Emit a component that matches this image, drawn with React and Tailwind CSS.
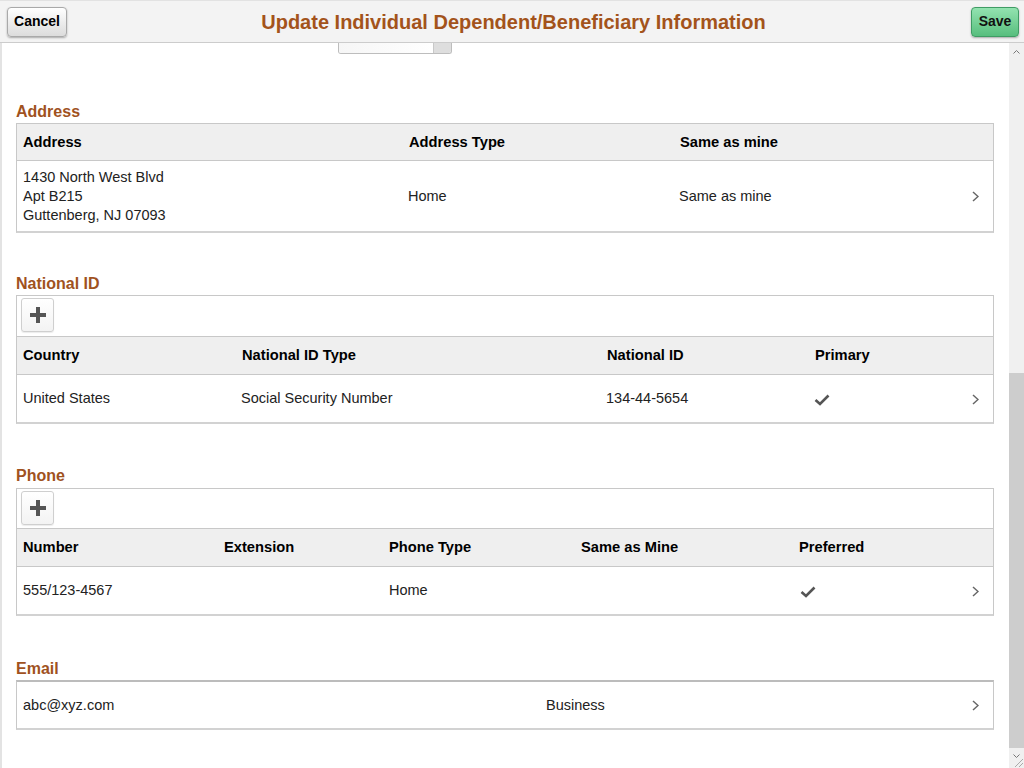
import React from "react";

const Chevron = () => (
  <svg width="7" height="11" viewBox="0 0 7 11" className="block">
    <polyline points="1,1 6,5.5 1,10" fill="none" stroke="#666" strokeWidth="1.5" />
  </svg>
);

const Check = () => (
  <svg width="16" height="12" viewBox="0 0 16 12" className="block">
    <path d="M1.5 6 L6 10 L14.5 1.5" fill="none" stroke="#555" strokeWidth="2.6" />
  </svg>
);

const PlusBtn = () => (
  <div className="w-[33px] h-[34px] border border-[#cfcfcf] rounded-[3px] bg-gradient-to-b from-white to-[#f3f3f3] shadow-[0_1px_1px_rgba(0,0,0,0.08)] flex items-center justify-center">
    <svg width="16" height="16" viewBox="0 0 16 16" className="block">
      <rect x="0" y="6" width="16" height="4" fill="#555" />
      <rect x="6" y="0" width="4" height="16" fill="#555" />
    </svg>
  </div>
);

const Heading = ({ children, mt }) => (
  <div className={`${mt} h-[21px] text-[16px] leading-[19px] font-bold text-[#a0521e]`}>{children}</div>
);

const ChevCell = () => (
  <div className="ml-auto mr-[14px] pt-[1px]">
    <Chevron />
  </div>
);

export default function App() {
  return (
    <div
      className="w-[1024px] h-[768px] flex flex-col bg-white overflow-hidden text-[#222]"
      style={{ fontFamily: '"Liberation Sans", Arial, sans-serif' }}
    >
      {/* Header */}
      <div className="h-[43px] shrink-0 bg-[#f3f3f3] border-t border-t-[#e2e2e2] border-b border-b-[#cccccc] grid grid-cols-[1fr_auto_1fr] items-center px-[7px] pr-[5px]">
        <div>
          <button className="w-[60px] h-[30px] rounded-[4px] border border-[#a9a9a9] bg-gradient-to-b from-white to-[#dcdcdc] shadow-[0_1px_2px_rgba(0,0,0,0.3)] text-[14px] font-bold text-black">
            Cancel
          </button>
        </div>
        <div className="text-[20px] font-bold text-[#a3531b] leading-[24px] pl-[1px]">
          Update Individual Dependent/Beneficiary Information
        </div>
        <div className="flex justify-end">
          <button className="w-[48px] h-[30px] rounded-[4px] border border-[#3f9c64] bg-gradient-to-b from-[#93e3b0] to-[#57be7e] shadow-[0_1px_2px_rgba(0,0,0,0.3)] text-[14px] font-bold text-[#111]">
            Save
          </button>
        </div>
      </div>

      <div className="flex flex-1 min-h-0">
        {/* Content */}
        <div className="flex-1 border-l-2 border-[#e3e3e3] pl-[14px] pr-[15px] text-[14.5px] leading-[19px]">
          {/* Dropdown fragment */}
          <div className="ml-[322px] w-[114px] h-[11px] flex border border-t-0 border-[#bdbdbd] rounded-b-[3px] overflow-hidden">
            <div className="flex-1 bg-gradient-to-r from-[#f6f6f6] to-white" />
            <div className="w-[18px] bg-[#dedede] border-l border-[#c9c9c9]" />
          </div>

          {/* Address */}
          <Heading mt="mt-[48px]">Address</Heading>
          <div className="border border-[#c8c8c8] border-b-2 border-b-[#d2d2d2]">
            <div className="h-[37px] bg-[#efefef] border-b border-[#c8c8c8] flex items-center pl-[6px] font-bold text-black text-[14.7px]">
              <div className="w-[386px]">Address</div>
              <div className="w-[271px]">Address Type</div>
              <div>Same as mine</div>
            </div>
            <div className="h-[70px] flex items-center pl-[6px]">
              <div className="w-[385px]">
                <div>1430 North West Blvd</div>
                <div>Apt B215</div>
                <div>Guttenberg, NJ 07093</div>
              </div>
              <div className="w-[271px]">Home</div>
              <div>Same as mine</div>
              <ChevCell />
            </div>
          </div>

          {/* National ID */}
          <Heading mt="mt-[41px]">National ID</Heading>
          <div className="border border-[#c8c8c8] border-b-2 border-b-[#d2d2d2]">
            <div className="h-[41px] border-b border-[#c8c8c8] pl-[4px] pt-[2px]">
              <PlusBtn />
            </div>
            <div className="h-[38px] bg-[#efefef] border-b border-[#c8c8c8] flex items-center pl-[6px] font-bold text-black text-[14.7px]">
              <div className="w-[219px]">Country</div>
              <div className="w-[365px]">National ID Type</div>
              <div className="w-[208px]">National ID</div>
              <div>Primary</div>
            </div>
            <div className="h-[47px] flex items-center pl-[6px]">
              <div className="w-[218px]">United States</div>
              <div className="w-[365px]">Social Security Number</div>
              <div className="w-[208px]">134-44-5654</div>
              <div className="pt-[2px]"><Check /></div>
              <ChevCell />
            </div>
          </div>

          {/* Phone */}
          <Heading mt="mt-[42px]">Phone</Heading>
          <div className="mt-[1px] border border-[#c8c8c8] border-b-2 border-b-[#d2d2d2]">
            <div className="h-[40px] border-b border-[#c8c8c8] pl-[4px] pt-[2px]">
              <PlusBtn />
            </div>
            <div className="h-[38px] bg-[#efefef] border-b border-[#c8c8c8] flex items-center pl-[6px] font-bold text-black text-[14.7px]">
              <div className="w-[201px]">Number</div>
              <div className="w-[165px]">Extension</div>
              <div className="w-[192px]">Phone Type</div>
              <div className="w-[218px]">Same as Mine</div>
              <div>Preferred</div>
            </div>
            <div className="h-[47px] flex items-center pl-[6px]">
              <div className="w-[201px]">555/123-4567</div>
              <div className="w-[165px]"></div>
              <div className="w-[192px]">Home</div>
              <div className="w-[218px]"></div>
              <div className="pl-[1px] pt-[2px]"><Check /></div>
              <ChevCell />
            </div>
          </div>

          {/* Email */}
          <Heading mt="mt-[43px]">Email</Heading>
          <div className="border border-[#c8c8c8] border-t-2 border-t-[#bcbcbc] border-b-2 border-b-[#d2d2d2]">
            <div className="h-[46px] flex items-center pl-[6px]">
              <div className="w-[523px]">abc@xyz.com</div>
              <div>Business</div>
              <ChevCell />
            </div>
          </div>
        </div>

        {/* Fake scrollbar */}
        <div className="w-[15px] shrink-0 bg-[#f0f0f0] flex flex-col">
          <div className="h-[17px] flex items-center justify-center">
            <svg width="7" height="4" viewBox="0 0 7 4" className="block">
              <polyline points="0.5,3.5 3.5,0.5 6.5,3.5" fill="none" stroke="#777" strokeWidth="1" />
            </svg>
          </div>
          <div className="h-[313px]" />
          <div className="flex-1 bg-[#cdcdcd]" />
          <div className="h-[20px] relative flex items-start justify-center pt-[6px]">
            <svg width="7" height="4" viewBox="0 0 7 4" className="block">
              <polyline points="0.5,0.5 3.5,3.5 6.5,0.5" fill="none" stroke="#777" strokeWidth="1" />
            </svg>
            <svg width="12" height="12" viewBox="0 0 12 12" className="absolute right-0 bottom-0 block">
              <line x1="11" y1="3" x2="3" y2="11" stroke="#aaa" strokeWidth="1" />
              <line x1="11" y1="7" x2="7" y2="11" stroke="#aaa" strokeWidth="1" />
            </svg>
          </div>
        </div>
      </div>
    </div>
  );
}
